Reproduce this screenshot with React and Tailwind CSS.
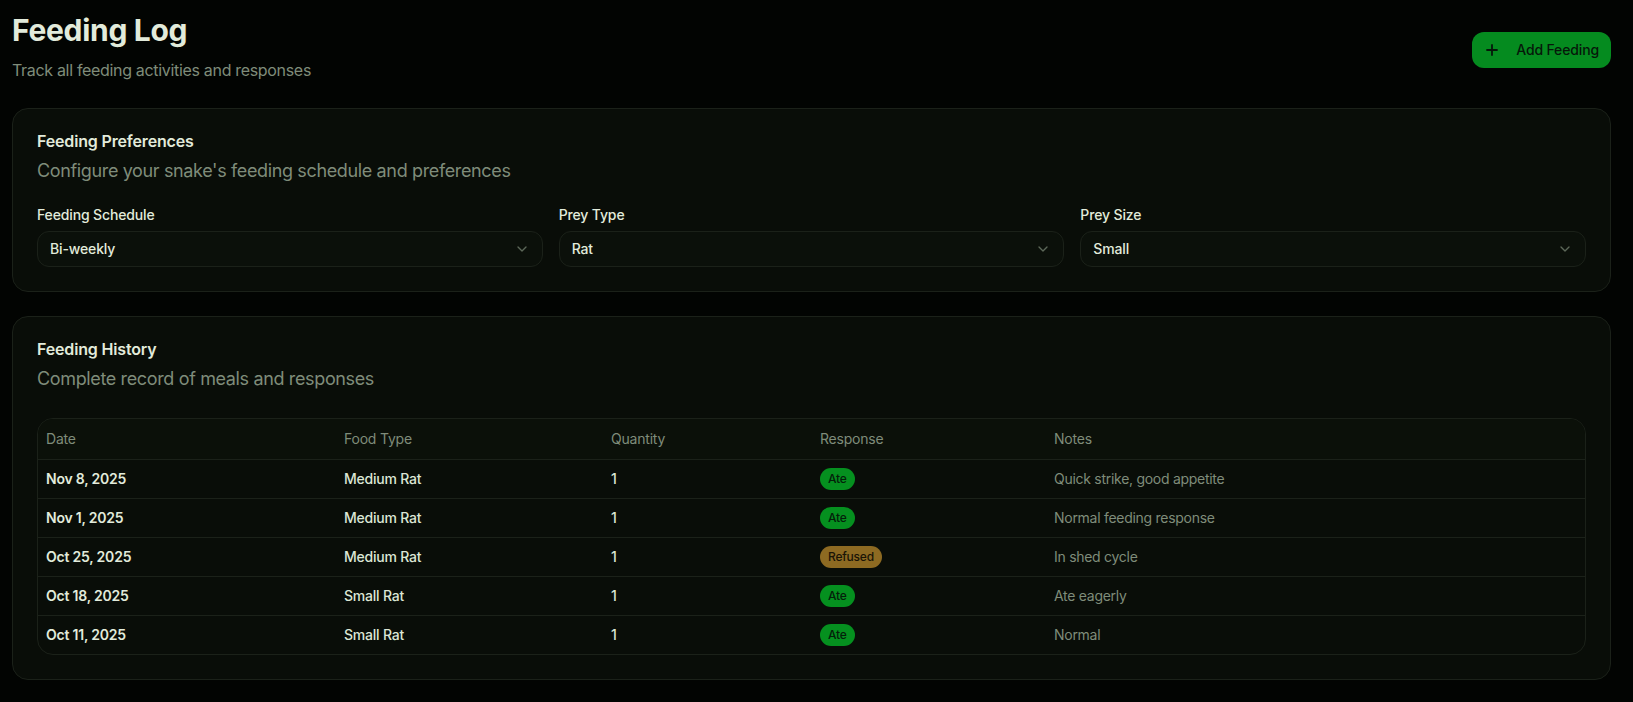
import { ChevronDown } from 'lucide-react'

const prefs = [
  { label: 'Feeding Schedule', value: 'Bi-weekly' },
  { label: 'Prey Type', value: 'Rat' },
  { label: 'Prey Size', value: 'Small' },
]

const feedings = [
  { date: 'Nov 8, 2025', food: 'Medium Rat', qty: 1, response: 'Ate', notes: 'Quick strike, good appetite' },
  { date: 'Nov 1, 2025', food: 'Medium Rat', qty: 1, response: 'Ate', notes: 'Normal feeding response' },
  { date: 'Oct 25, 2025', food: 'Medium Rat', qty: 1, response: 'Refused', notes: 'In shed cycle' },
  { date: 'Oct 18, 2025', food: 'Small Rat', qty: 1, response: 'Ate', notes: 'Ate eagerly' },
  { date: 'Oct 11, 2025', food: 'Small Rat', qty: 1, response: 'Ate', notes: 'Normal' },
]

function Card({ title, description, children }) {
  return (
    <section className="rounded-2xl border border-[#1b2119] bg-[#090d08] p-6">
      <h2 className="text-base font-semibold leading-4 tracking-[-0.01em] text-[#e2ebdb]">{title}</h2>
      <p className="mt-2 text-lg leading-7 tracking-[-0.02em] text-[#7f8c7a]">{description}</p>
      {children}
    </section>
  )
}

function ResponseBadge({ response }) {
  const refused = response === 'Refused'
  return (
    <span
      className={
        refused
          ? 'inline-flex h-[22px] items-center rounded-full bg-[#8d6a22] px-2 text-xs font-medium text-[#1a1406]'
          : 'inline-flex h-[22px] items-center rounded-full bg-[#05901f] px-2 text-xs font-medium text-[#04200a]'
      }
    >
      {response}
    </span>
  )
}

export default function App() {
  return (
    <div
      className="min-h-screen bg-[#020402] pl-3 pr-[22px] pt-3 pb-6 text-[#e2ebdb]"
      style={{ fontFamily: 'Inter, "Noto Sans", sans-serif' }}
    >
      {/* Header */}
      <div className="flex items-start justify-between">
        <div>
          <h1 className="text-3xl font-bold leading-9 tracking-[-0.01em] text-[#e2ebdb]">Feeding Log</h1>
          <p className="mt-[10px] text-base leading-6 tracking-[-0.02em] text-[#7f8c7a]">Track all feeding activities and responses</p>
        </div>
        <button className="mt-5 flex h-9 items-center gap-[18px] rounded-xl bg-[#058b1f] pl-[14px] pr-3 text-sm font-medium tracking-[-0.01em] text-[#06180a]">
          <svg width="12" height="12" viewBox="0 0 12 12" fill="none" stroke="currentColor" strokeWidth="1.8" strokeLinecap="round">
            <path d="M6 1v10M1 6h10" />
          </svg>
          <span>Add Feeding</span>
        </button>
      </div>

      <div className="mt-[26px] flex flex-col gap-6">
        {/* Preferences */}
        <Card title="Feeding Preferences" description="Configure your snake's feeding schedule and preferences">
          <div className="mt-5 grid grid-cols-3 gap-4">
            {prefs.map((p) => (
              <div key={p.label} className="flex flex-col gap-[6px]">
                <label className="text-sm font-medium leading-5 tracking-[-0.01em] text-[#e2ebdb]">{p.label}</label>
                <button className="flex h-9 w-full items-center justify-between rounded-xl border border-[#1b2119] bg-[#0b100a] px-3 text-sm font-medium tracking-[-0.01em] text-[#e2ebdb]">
                  <span>{p.value}</span>
                  <ChevronDown size={16} className="text-[#5d6859]" />
                </button>
              </div>
            ))}
          </div>
        </Card>

        {/* History */}
        <Card title="Feeding History" description="Complete record of meals and responses">
          <div className="mt-[25px] overflow-hidden rounded-2xl border border-[#1b2119]">
            <table className="w-full table-fixed text-left text-sm tracking-[-0.015em]">
              <thead className="bg-[#0b1009]">
                <tr className="border-b border-[#1b2119]">
                  <th className="h-10 w-[298px] px-2 font-normal text-[#7f8c7a]">Date</th>
                  <th className="h-10 w-[267px] px-2 font-normal text-[#7f8c7a]">Food Type</th>
                  <th className="h-10 w-[209px] px-2 font-normal text-[#7f8c7a]">Quantity</th>
                  <th className="h-10 w-[234px] px-2 font-normal text-[#7f8c7a]">Response</th>
                  <th className="h-10 px-2 font-normal text-[#7f8c7a]">Notes</th>
                </tr>
              </thead>
              <tbody>
                {feedings.map((f, i) => (
                  <tr key={f.date} className={i < feedings.length - 1 ? 'border-b border-[#1b2119]' : ''}>
                    <td className="p-2 font-semibold text-[#e2ebdb]">{f.date}</td>
                    <td className="p-2 font-medium text-[#dce6d5]">{f.food}</td>
                    <td className="p-2 font-medium text-[#dce6d5]">{f.qty}</td>
                    <td className="p-2">
                      <ResponseBadge response={f.response} />
                    </td>
                    <td className="p-2 tracking-[-0.02em] text-[#7f8c7a]">{f.notes}</td>
                  </tr>
                ))}
              </tbody>
            </table>
          </div>
        </Card>
      </div>
    </div>
  )
}
